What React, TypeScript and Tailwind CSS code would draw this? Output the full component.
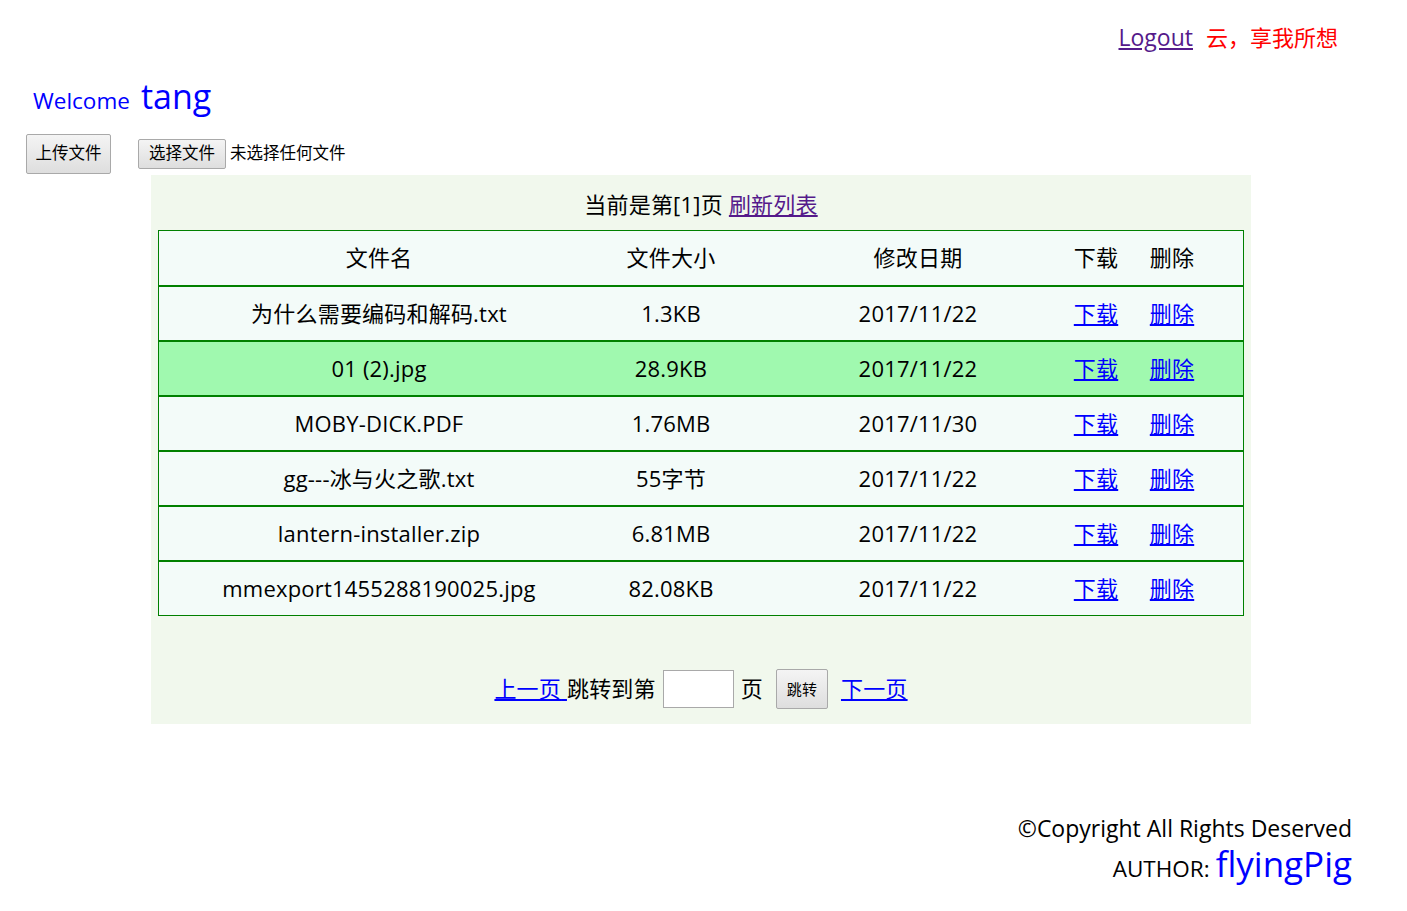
import React from 'react';

const files = [
  { name: '为什么需要编码和解码.txt', size: '1.3KB', date: '2017/11/22' },
  { name: '01 (2).jpg', size: '28.9KB', date: '2017/11/22', hl: true },
  { name: 'MOBY-DICK.PDF', size: '1.76MB', date: '2017/11/30' },
  { name: 'gg---冰与火之歌.txt', size: '55字节', date: '2017/11/22' },
  { name: 'lantern-installer.zip', size: '6.81MB', date: '2017/11/22' },
  { name: 'mmexport1455288190025.jpg', size: '82.08KB', date: '2017/11/22' },
];

const font = "font-['Open_Sans','Noto_Sans_CJK_SC',sans-serif]";

function Row({ cells, className }: { cells: React.ReactNode[]; className: string }) {
  return (
    <div className={`flex items-center text-[22px] tracking-[0.2px] text-black ${className}`}>
      <div className="w-[440px] text-center">{cells[0]}</div>
      <div className="w-[144px] text-center">{cells[1]}</div>
      <div className="w-[200px] ml-[75px] text-center">{cells[2]}</div>
      <div className="w-[100px] ml-[28px] text-center">{cells[3]}</div>
      <div className="w-[52px] text-center">{cells[4]}</div>
    </div>
  );
}

export default function App() {
  return (
    <div className={`w-[1407px] h-[911px] bg-white ${font}`}>
      {/* top bar */}
      <div className="flex justify-end items-center pt-[22px] pr-[69px] h-[52px] text-[22px]">
        <a href="#" className="text-[#551a8b] underline text-[23px]">Logout</a>
        <span className="ml-[13px] text-[#ff0000]">云，享我所想</span>
      </div>

      <div className="flex items-baseline pl-[33px] mt-[26px] text-[#0000ff]">
        <span className="text-[22.5px]">Welcome</span>
        <span className="ml-[11px] text-[34px] leading-[36px]">tang</span>
      </div>

      <div className="flex items-center pl-[26px] mt-[16px]">
        <button className="w-[85px] h-[40px] border border-[#a9a9a9] rounded-[2px] bg-gradient-to-b from-[#f4f4f4] to-[#dedede] text-[16.5px] text-black">
          上传文件
        </button>
        <button className="ml-[27px] w-[88px] h-[30px] border border-[#a9a9a9] rounded-[2px] bg-gradient-to-b from-[#f4f4f4] to-[#dedede] text-[16.5px] text-black">
          选择文件
        </button>
        <span className="ml-[4px] text-[16.5px] text-black">未选择任何文件</span>
      </div>

      {/* list panel */}
      <div className="ml-[151px] w-[1100px] h-[549px] mt-[1px] bg-[#f1f8ed] px-[7px] flex flex-col">
        <div className="h-[55px] flex items-center justify-center text-[22px] tracking-[0.2px] text-black pt-[5px]">
          当前是第[1]页
          <a href="#" className="ml-[6px] text-[#551a8b] underline">刷新列表</a>
        </div>
        <div className="border border-[#008000] bg-[#f3fbf9]">
          <Row cells={['文件名', '文件大小', '修改日期', '下载', '删除']} className="h-[54px]" />
          {files.map((f) => (
            <Row
              key={f.name}
              className={`border-t-2 border-[#008000] h-[55px] ${f.hl ? 'bg-[#a0f9af]' : ''}`}
              cells={[
                f.name,
                f.size,
                f.date,
                <a href="#" className="text-[#0000ff] underline">下载</a>,
                <a href="#" className="text-[#0000ff] underline">删除</a>,
              ]}
            />
          ))}
        </div>

        <div className="flex items-center justify-center mt-[53px] text-[22px] tracking-[0.2px] text-black">
          <a href="#" className="text-[#0000ff] underline">上一页{'\u00a0'}</a>
          <span>跳转到第</span>
          <input className="ml-[7px] w-[71px] h-[38px] border border-[#a9a9a9] bg-white" />
          <span className="ml-[7px]">页</span>
          <button className="ml-[13px] w-[52px] h-[40px] border border-[#a9a9a9] rounded-[2px] bg-gradient-to-b from-[#f4f4f4] to-[#dedede] text-[15px] text-black">
            跳转
          </button>
          <a href="#" className="ml-[13px] text-[#0000ff] underline">下一页</a>
        </div>
      </div>

      {/* footer */}
      <div className="flex flex-col items-end pr-[55px] mt-[89px] text-black">
        <div className="text-[23px] leading-[30px]">©Copyright All Rights Deserved</div>
        <div className="flex items-baseline">
          <span className="text-[22.5px]">AUTHOR:</span>
          <span className="ml-[6px] text-[35px] leading-[42px] text-[#0000ff]">flyingPig</span>
        </div>
      </div>
    </div>
  );
}
